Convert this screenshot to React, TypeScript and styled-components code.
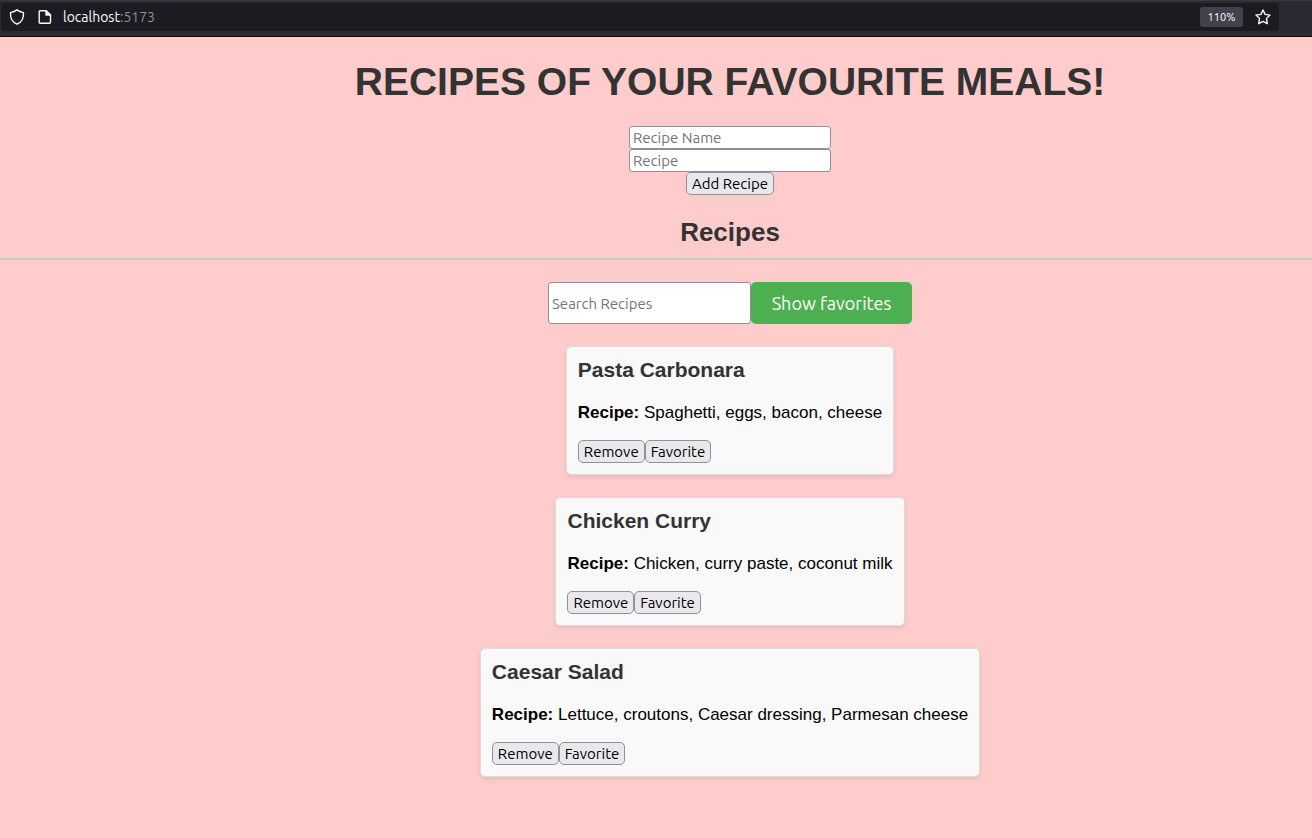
import React, { useState } from "react";
import styled, { createGlobalStyle } from "styled-components";

const GlobalStyle = createGlobalStyle`
  *, *::before, *::after { box-sizing: border-box; }
  body {
    margin: 0;
    background: #ffcccc;
    color: #000;
    font-family: "Liberation Sans", Arial, sans-serif;
    font-size: 17px;
    line-height: 21px;
  }
`;

const uiFont = `Ubuntu, "Noto Sans", sans-serif`;

const BrowserBar = styled.header`
  display: flex;
  height: 37px;
  padding: 2px 33px 5px 1px;
  background: #2b2a33;
  border-top: 1px solid #38383d;
  border-bottom: 1px solid #0c0c0d;
  color: #fbfbfe;
`;

const AddressField = styled.div`
  flex: 1;
  display: flex;
  align-items: center;
  padding: 0 8px;
  background: #1c1b22;
  border-radius: 4px;
`;

const PageIcons = styled.div`
  display: flex;
  gap: 12px;
  margin-right: 10px;
`;

const BarIcon = styled.svg`
  flex: none;
  width: 16px;
  height: 16px;
  fill: none;
  stroke: currentColor;
  stroke-width: 1.4;
  stroke-linejoin: round;
`;

const StarButton = styled.button`
  display: flex;
  padding: 0;
  border: 0;
  background: none;
  color: inherit;
`;

const Address = styled.span`
  flex: 1;
  font: 14px/20px ${uiFont};
`;

const Port = styled.span`
  color: #8f8f98;
`;

const ZoomLevel = styled.button`
  width: 43px;
  height: 20px;
  margin-right: 12px;
  padding: 0;
  border: 0;
  border-radius: 3px;
  background: #42414d;
  color: #fbfbfe;
  font: 11px/20px ${uiFont};
`;

const Section = styled.section`
  display: flex;
  flex-direction: column;
  align-items: center;
  padding-left: 148px;
`;

const Title = styled.h1`
  margin: 22px 0;
  color: #333;
  font-size: 39px;
  line-height: 45px;
`;

const Form = styled.form`
  display: flex;
  flex-direction: column;
  align-items: center;
`;

const TextInput = styled.input<{ $tall?: boolean }>`
  width: ${(p) => (p.$tall ? 203 : 202)}px;
  height: ${(p) => (p.$tall ? 42 : 23)}px;
  padding: 0 3px;
  border: 1px solid #8f8f9d;
  border-radius: 3px;
  background: #fff;
  font: 15px/20px ${uiFont};

  &::placeholder { color: #757575; opacity: 1; }
`;

const SmallButton = styled.button`
  height: 23px;
  min-width: 66px;
  padding: 0 5px;
  border: 1px solid #8f8f9d;
  border-radius: 5px;
  background: #e9e9ed;
  color: #000;
  font: 15px/20px ${uiFont};
`;

const ListTitle = styled.h2`
  margin: 22px 0 11px;
  color: #333;
  font-size: 26px;
  line-height: 30px;
`;

const Divider = styled.hr`
  margin: 0 0 22px;
  border: 0;
  border-top: 2px solid #ccc;
`;

const SearchRow = styled.div`
  display: flex;
  margin-bottom: 22px;
`;

const FavoritesButton = styled.button`
  width: 161px;
  height: 42px;
  padding: 0;
  border: 0;
  border-radius: 5px;
  background: #4caf50;
  color: #fff;
  font: 18px/22px ${uiFont};
`;

const Cards = styled.ul`
  display: flex;
  flex-direction: column;
  align-items: center;
  gap: 22px;
  margin: 0;
  padding: 0 0 22px;
  list-style: none;
`;

const Card = styled.li`
  padding: 11px;
  border: 1px solid #ddd;
  border-radius: 5px;
  background: #f9f9f9;
  box-shadow: 0 2px 4px rgba(0, 0, 0, 0.1);
`;

const CardTitle = styled.h3`
  margin: 0 0 20px;
  color: #333;
  font-size: 21px;
  line-height: 24px;
`;

const Ingredients = styled.p`
  margin: 0 0 17px;
`;

const Actions = styled.div`
  display: flex;
`;

interface Recipe {
  name: string;
  text: string;
  favorite: boolean;
}

const initialRecipes: Recipe[] = [
  { name: "Pasta Carbonara", text: "Spaghetti, eggs, bacon, cheese", favorite: false },
  { name: "Chicken Curry", text: "Chicken, curry paste, coconut milk", favorite: false },
  { name: "Caesar Salad", text: "Lettuce, croutons, Caesar dressing, Parmesan cheese", favorite: false },
];

export default function App() {
  const [recipes, setRecipes] = useState(initialRecipes);
  const [name, setName] = useState("");
  const [text, setText] = useState("");
  const [query, setQuery] = useState("");
  const [onlyFavorites, setOnlyFavorites] = useState(false);

  const addRecipe = (e: React.FormEvent) => {
    e.preventDefault();
    if (!name || !text) return;
    setRecipes([...recipes, { name, text, favorite: false }]);
    setName("");
    setText("");
  };

  const visible = recipes.filter(
    (r) => r.name.toLowerCase().includes(query.toLowerCase()) && (!onlyFavorites || r.favorite)
  );

  return (
    <>
      <GlobalStyle />
      <BrowserBar>
        <AddressField>
          <PageIcons>
            <BarIcon viewBox="0 0 16 16" aria-hidden="true">
              <path d="M8 0.9C6.2 2.3 4 3.1 1.5 3.6C1.2 8.9 3.2 13.2 8 15.2C12.8 13.2 14.8 8.9 14.5 3.6C12 3.1 9.8 2.3 8 0.9Z" />
            </BarIcon>
            <BarIcon viewBox="0 0 16 16" aria-hidden="true">
              <path d="M3.2 1.7H9.2L13.5 6V13.3Q13.5 14.3 12.5 14.3H3.2Q2.2 14.3 2.2 13.3V2.7Q2.2 1.7 3.2 1.7Z" />
              <path d="M9 1.7V6H13.5Z" fill="currentColor" />
            </BarIcon>
          </PageIcons>
          <Address>
            localhost<Port>:5173</Port>
          </Address>
          <ZoomLevel type="button">110%</ZoomLevel>
          <StarButton type="button" aria-label="Bookmark this page">
            <BarIcon viewBox="0 0 16 16">
              <path d="M8 1L10.1 5.4L15 6.1L11.5 9.6L12.3 14.7L8 12.4L3.7 14.7L4.5 9.6L1 6.1L5.9 5.4Z" />
            </BarIcon>
          </StarButton>
        </AddressField>
      </BrowserBar>
      <main>
        <Section>
          <Title>RECIPES OF YOUR FAVOURITE MEALS!</Title>
          <Form onSubmit={addRecipe}>
            <TextInput
              aria-label="Recipe Name"
              placeholder="Recipe Name"
              value={name}
              onChange={(e) => setName(e.target.value)}
            />
            <TextInput
              aria-label="Recipe"
              placeholder="Recipe"
              value={text}
              onChange={(e) => setText(e.target.value)}
            />
            <SmallButton type="submit">Add Recipe</SmallButton>
          </Form>
          <ListTitle>Recipes</ListTitle>
        </Section>
        <Divider />
        <Section>
          <SearchRow>
            <TextInput
              $tall
              aria-label="Search Recipes"
              placeholder="Search Recipes"
              value={query}
              onChange={(e) => setQuery(e.target.value)}
            />
            <FavoritesButton type="button" onClick={() => setOnlyFavorites(!onlyFavorites)}>
              Show favorites
            </FavoritesButton>
          </SearchRow>
          <Cards>
            {visible.map((recipe) => (
              <Card key={recipe.name}>
                <CardTitle>{recipe.name}</CardTitle>
                <Ingredients>
                  <strong>Recipe:</strong> {recipe.text}
                </Ingredients>
                <Actions>
                  <SmallButton type="button" onClick={() => setRecipes(recipes.filter((r) => r !== recipe))}>
                    Remove
                  </SmallButton>
                  <SmallButton
                    type="button"
                    onClick={() =>
                      setRecipes(recipes.map((r) => (r === recipe ? { ...r, favorite: !r.favorite } : r)))
                    }
                  >
                    Favorite
                  </SmallButton>
                </Actions>
              </Card>
            ))}
          </Cards>
        </Section>
      </main>
    </>
  );
}
